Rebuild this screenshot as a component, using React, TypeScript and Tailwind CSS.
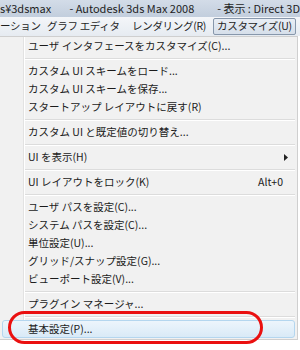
type Row =
  | { kind: "item"; label: string; shortcut?: string; submenu?: boolean; active?: boolean }
  | { kind: "sep" };

const rows: Row[] = [
  { kind: "item", label: "ユーザ インタフェースをカスタマイズ(C)..." },
  { kind: "sep" },
  { kind: "item", label: "カスタム UI スキームをロード..." },
  { kind: "item", label: "カスタム UI スキームを保存..." },
  { kind: "item", label: "スタートアップ レイアウトに戻す(R)" },
  { kind: "sep" },
  { kind: "item", label: "カスタム UI と既定値の切り替え..." },
  { kind: "sep" },
  { kind: "item", label: "UI を表示(H)", submenu: true },
  { kind: "sep" },
  { kind: "item", label: "UI レイアウトをロック(K)", shortcut: "Alt+0" },
  { kind: "sep" },
  { kind: "item", label: "ユーザ パスを設定(C)..." },
  { kind: "item", label: "システム パスを設定(C)..." },
  { kind: "item", label: "単位設定(U)..." },
  { kind: "item", label: "グリッド/スナップ設定(G)..." },
  { kind: "item", label: "ビューポート設定(V)..." },
  { kind: "sep" },
  { kind: "item", label: "プラグイン マネージャ..." },
  { kind: "sep" },
  { kind: "item", label: "基本設定(P)...", active: true },
];

function MenuRow({ row }: { row: Row }) {
  if (row.kind === "sep") {
    return (
      <div className="flex h-[7px]">
        <div className="w-[24px] shrink-0 border-r border-[#e2e2e2]" />
        <div className="w-px bg-white" />
        <div className="flex flex-1 flex-col justify-center pr-[2px]">
          <div className="h-px bg-[#dcdcdc]" />
          <div className="h-px bg-white" />
        </div>
      </div>
    );
  }
  if (row.active) {
    return (
      <div className="mx-[2px] flex h-[18px] items-center rounded-[3px] border border-[#b4d6ef] bg-gradient-to-b from-[#edf5fc] to-[#d9eaf7] pl-[25px] text-[#1b1b1b]">
        {row.label}
      </div>
    );
  }
  return (
    <div className="flex h-[18px]">
      <div className="w-[24px] shrink-0 border-r border-[#e2e2e2]" />
      <div className="w-px bg-white" />
      <div className="flex flex-1 items-center pl-[3px] pr-[12px] text-[#1b1b1b]">
        <span className="flex-1">{row.label}</span>
        {row.shortcut && <span className="mr-[2px]">{row.shortcut}</span>}
        {row.submenu && (
          <svg width="4" height="7" viewBox="0 0 4 7" className="mr-[-3px]">
            <path d="M0 0 L4 3.5 L0 7 Z" fill="#222" />
          </svg>
        )}
      </div>
    </div>
  );
}

export default function App() {
  return (
    <div
      className="relative flex h-[350px] w-[300px] flex-col overflow-hidden bg-white text-[10.5px] leading-none"
      style={{ fontFamily: '"Noto Sans CJK JP", "Noto Sans", sans-serif' }}
    >
      {/* title bar */}
      <div className="flex h-[17px] shrink-0 items-center whitespace-nowrap bg-gradient-to-b from-[#d3dce8] to-[#c2cedd] text-[11px] text-[#1e1e1e]">
        <span className="w-[70px]">s¥3dsmax</span>
        <span className="w-[149px]">- Autodesk 3ds Max 2008</span>
        <span>- 表示 : Direct 3D</span>
      </div>

      {/* menu bar */}
      <div className="flex h-[19px] shrink-0 items-center whitespace-nowrap bg-gradient-to-b from-[#f4f6f9] to-[#e6ebf1] text-[10.5px] tracking-[-0.3px] text-[#1e1e1e]">
        <span className="w-[47px]">ーション</span>
        <span className="w-[85px]">グラフ エディタ</span>
        <span className="w-[81px]">レンダリング(R)</span>
        <span className="flex h-[17px] items-center rounded-[2px] border border-[#8797ab] bg-gradient-to-b from-[#e9eef5] to-[#d6dfea] px-[3px]">
          カスタマイズ(U)
        </span>
      </div>

      {/* dropdown */}
      <div className="flex w-[298px] flex-col border-b border-r border-t border-[#cfcfcf] bg-[#f1f1f1] pb-[1px] whitespace-nowrap">
        {rows.map((row, i) => (
          <MenuRow key={i} row={row} />
        ))}
      </div>

      {/* red highlight mark */}
      <div className="absolute left-[8px] top-[311px] h-[33px] w-[255px] rounded-full border-[3px] border-[#ea1010]" />
    </div>
  );
}
